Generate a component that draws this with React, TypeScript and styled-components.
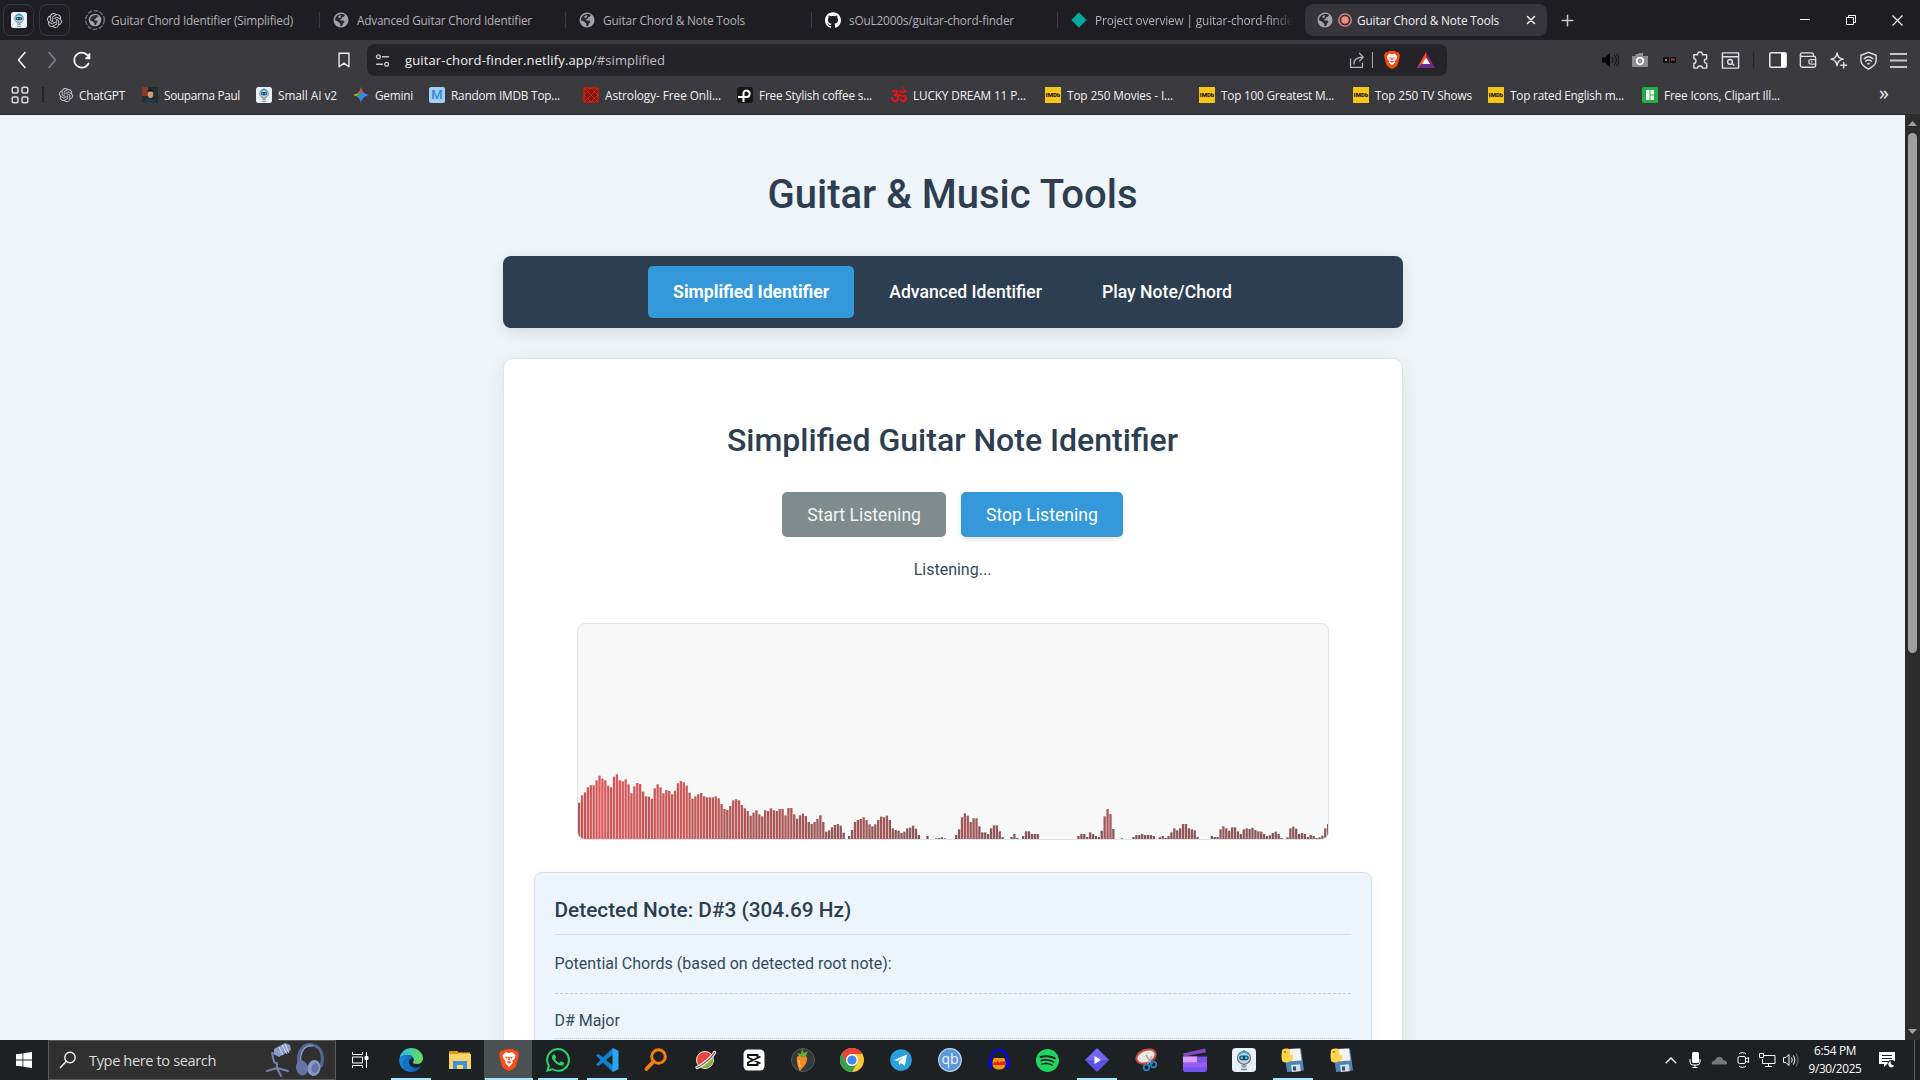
import React, { useLayoutEffect, useRef, useState } from "react";
import styled, { createGlobalStyle, css } from "styled-components";
import { SiOpenai, SiGithub, SiSpotify, SiWhatsapp } from "react-icons/si";

const ui = `"Open Sans", "Noto Sans", sans-serif`;

const GlobalStyle = createGlobalStyle`
  * { box-sizing: border-box; }
  body { margin: 0; overflow: hidden; background: #eef4f8; }
  svg { display: block; flex: none; }
`;

const Screen = styled.div`
  width: 1920px;
  height: 1080px;
  display: grid;
  grid-template-rows: 40px 40px 35px 925px 40px;
  font-family: ${ui};
  overflow: hidden;
`;

/* Label whose tracking adapts so that the text fills a known width */
const LabelText = styled.span`
  white-space: pre;
  display: inline-block;
`;
function Label({ text, width }: { text: string; width?: number }) {
  const ref = useRef<HTMLSpanElement>(null);
  const [track, setTrack] = useState(0);
  useLayoutEffect(() => {
    if (ref.current && width) {
      setTrack((width - ref.current.getBoundingClientRect().width) / text.length);
    }
  }, []);
  return <LabelText ref={ref} style={{ letterSpacing: track }}>{text}</LabelText>;
}

/* ---------- Tab strip ---------- */
const TabStrip = styled.div`
  display: flex;
  align-items: center;
  background: #1e1d22;
  padding-left: 3px;
`;
const PinnedTab = styled.div`
  width: 31px;
  height: 32px;
  margin-right: 5px;
  border: 1px solid #37363c;
  border-radius: 8px;
  display: flex;
  align-items: center;
  justify-content: center;
`;
const Tab = styled.div<{ $active?: boolean; $first?: boolean }>`
  width: ${(p) => (p.$active ? 242 : p.$first ? 244 : 245)}px;
  flex: none;
  height: 32px;
  display: flex;
  align-items: center;
  gap: ${(p) => (p.$active ? 5 : p.$first ? 6 : 8)}px;
  padding-left: ${(p) => (p.$active ? 12 : p.$first ? 10 : 13)}px;
  margin-left: ${(p) => (p.$active ? 2 : 0)}px;
  border-radius: ${(p) => (p.$active ? 8 : 0)}px;
  background: ${(p) => (p.$active ? "#36353b" : "transparent")};
  color: ${(p) => (p.$active ? "#f2f1f4" : "#b4b2b8")};
  font-size: 11.8px;
  overflow: hidden;
`;
const TabTitle = styled.div<{ $fade?: boolean }>`
  flex: 1;
  margin-top: -1px;
  overflow: hidden;
  white-space: nowrap;
  ${(p) => p.$fade && css`mask-image: linear-gradient(90deg, #000 85%, transparent 95%);`}
`;
const TabRule = styled.div`
  width: 1px;
  height: 16px;
  background: #3b3a40;
`;
const WindowButtons = styled.div`
  margin-left: auto;
  display: flex;
`;
const WindowButton = styled.div`
  width: 46px;
  display: flex;
  justify-content: center;
`;
const NewTab = styled.div`margin-left: 14px;`;
const TabClose = styled.div`margin-right: 11px;`;

/* ---------- Toolbar ---------- */
const Toolbar = styled.div`
  display: flex;
  align-items: center;
  background: #3b3a3f;
  padding: 4px 7px;
`;
const ToolSlot = styled.div<{ $w?: number }>`
  width: ${(p) => p.$w ?? 30}px;
  height: 32px;
  display: flex;
  align-items: center;
  justify-content: center;
`;
const ToolSpacer = styled.div<{ $w?: number }>`
  ${(p) => (p.$w ? `width: ${p.$w}px;` : "flex: 1;")}
`;
const AddressBar = styled.div`
  width: 1080px;
  height: 32px;
  margin-left: 8px;
  display: flex;
  align-items: center;
  background: #242328;
  border-radius: 8px;
  padding: 0 3px 0 8px;
  color: #f1f1f3;
  font-size: 13px;
`;
const Url = styled.div`
  margin-left: 15px;
  flex: 1;
  em { font-style: normal; color: #c0bfc5; }
`;
const Rule = styled.div<{ $h: number; $c: string }>`
  width: 1px;
  height: ${(p) => p.$h}px;
  background: ${(p) => p.$c};
`;

/* ---------- Bookmarks ---------- */
const Bookmarks = styled.div`
  display: flex;
  align-items: center;
  background: #3b3a3f;
  border-bottom: 1px solid #2d2c31;
  padding: 0 31px 5px 11px;
  color: #f2f1f4;
  font-size: 11.8px;
`;
const Bookmark = styled.div<{ $w: number }>`
  width: ${(p) => p.$w}px;
  flex: none;
  display: flex;
  align-items: center;
  gap: 6px;
  white-space: nowrap;
`;
const BookmarkRule = styled.div`
  width: 2px;
  height: 16px;
  margin: 0 15px 0 13px;
  background: #242328;
`;
const More = styled.div`
  margin-left: auto;
  font-size: 20px;
  line-height: 16px;
  padding-bottom: 3px;
`;
const Tile = styled.div<{ $bg: string; $fg: string; $size?: number; $r?: number }>`
  width: 16px;
  height: 16px;
  flex: none;
  display: flex;
  align-items: center;
  justify-content: center;
  background: ${(p) => p.$bg};
  color: ${(p) => p.$fg};
  border-radius: ${(p) => p.$r ?? 0}px;
  font: ${(p) => ((p.$size ?? 12) > 10 ? 500 : 900)} ${(p) => p.$size ?? 12}px/1 "Roboto", sans-serif;
`;

/* ---------- Page ---------- */
const Viewport = styled.div`
  display: flex;
  overflow: hidden;
  background: #eef4f8;
`;
const Page = styled.main`
  width: 1905px;
  display: flex;
  flex-direction: column;
  align-items: center;
  font-family: Roboto, sans-serif;
  color: #34495e;
`;
const Title = styled.h1`
  margin: 52px 0 0;
  height: 89px;
  flex: none;
  line-height: 56px;
  font-size: 40px;
  font-weight: 500;
  color: #2c3e50;
`;
const Nav = styled.nav`
  width: 900px;
  height: 72px;
  flex: none;
  display: flex;
  justify-content: center;
  align-items: center;
  gap: 10px;
  background: #2c3e50;
  border-radius: 8px;
  box-shadow: 0 4px 15px rgba(0, 0, 0, 0.1);
`;
const NavButton = styled.button<{ $active?: boolean }>`
  height: 52px;
  padding: 0 25px;
  border: 0;
  border-radius: 5px;
  background: ${(p) => (p.$active ? "#3498db" : "transparent")};
  color: #fff;
  font: ${(p) => (p.$active ? 700 : 500)} 17.6px Roboto, sans-serif;
`;
const Card = styled.section`
  width: 900px;
  flex: none;
  margin-top: 30px;
  height: 900px;
  padding: 56px 30px 30px;
  display: flex;
  flex-direction: column;
  align-items: center;
  background: #fff;
  border: 1px solid #dce4ec;
  border-radius: 10px;
  box-shadow: 0 5px 20px rgba(0, 0, 0, 0.08);
`;
const Heading = styled.h2`
  margin: 0;
  height: 77px;
  line-height: 50px;
  font-size: 32px;
  font-weight: 500;
  color: #2c3e50;
`;
const Actions = styled.div`
  display: flex;
  gap: 15px;
`;
const ActionButton = styled.button<{ $disabled?: boolean }>`
  height: 45px;
  padding: 0 25px;
  border: 0;
  border-radius: 5px;
  color: ${(p) => (p.$disabled ? "#f4f6f6" : "#fff")};
  background: ${(p) => (p.$disabled ? "#7f8c8d" : "#3498db")};
  box-shadow: ${(p) => (p.$disabled ? "none" : "0 2px 5px rgba(0,0,0,.12)")};
  font: 400 17.6px Roboto, sans-serif;
`;
const Status = styled.p`
  margin: 20px 0 0;
  font-size: 16px;
  line-height: 26px;
`;
const Spectrum = styled.div`
  width: 752px;
  height: 217px;
  flex: none;
  margin-top: 40px;
  background: #f8f8f8;
  border: 1px solid #dce4ec;
  border-radius: 8px;
  overflow: hidden;
`;
const Results = styled.div`
  width: 838px;
  margin-top: 32px;
  height: 300px;
  flex: none;
  padding: 20px;
  background: #ecf5fb;
  border: 1px solid #d3e2eb;
  border-radius: 8px;
  box-shadow: 0 2px 10px rgba(0, 0, 0, 0.05);
`;
const Detected = styled.h3`
  margin: 0 0 15px;
  height: 42px;
  line-height: 34px;
  font-size: 20.8px;
  font-weight: 500;
  color: #2c3e50;
  border-bottom: 1px solid #d9dfe2;
`;
const Hint = styled.p`
  margin: 0;
  height: 44px;
  line-height: 27px;
  font-size: 16px;
  border-bottom: 1px dashed #c5ced2;
`;
const Chord = styled.p`
  margin: 0;
  padding-top: 14px;
  height: 45px;
  line-height: 26px;
  font-size: 16px;
  border-bottom: 1px dotted #c5ced2;
`;
const Scrollbar = styled.div`
  width: 15px;
  background: #2c2c2c;
  display: flex;
  flex-direction: column;
  align-items: center;
  padding: 6px 0 6px;
`;
const Thumb = styled.div`
  width: 9px;
  height: 520px;
  margin: 7px 0 auto;
  border-radius: 5px;
  background: #9f9f9f;
`;

/* ---------- Taskbar ---------- */
const Taskbar = styled.footer`
  display: flex;
  background: #1d2124;
  color: #fff;
`;
const StartButton = styled.div`
  width: 48px;
  display: flex;
  align-items: center;
  justify-content: center;
`;
const Search = styled.div`
  width: 288px;
  border: 1px solid #5c5c5c;
  background: #303030;
  display: flex;
  align-items: center;
  padding-left: 10px;
  color: #dcdcdc;
  font-size: 14.6px;
`;
const SearchText = styled.div`
  margin-left: 12px;
  flex: 1;
`;
const TaskView = styled.div`
  width: 50px;
  padding-right: 2px;
  display: flex;
  align-items: center;
  justify-content: center;
`;
const Apps = styled.div`
  display: flex;
`;
const AppSlot = styled.div<{ $open?: boolean; $active?: boolean }>`
  width: 49px;
  height: 40px;
  display: flex;
  justify-content: center;
  align-items: center;
  background: ${(p) => (p.$active ? "linear-gradient(#4b5053, #4b5053) no-repeat 0 0 / 48px 40px" : "none")};
  ${(p) =>
    p.$open &&
    css`
      &::after {
        content: "";
        flex: none;
        align-self: flex-end;
        height: 2px;
        width: ${p.$active ? 48 : 40}px;
        margin-left: ${p.$active ? -48 : -44}px;
        margin-right: ${p.$active ? 0 : 4}px;
        background: #a8e6fa;
      }
    `}
`;
const SlotIcon = styled.div`
  width: 49px;
  flex: none;
  display: flex;
  justify-content: center;
`;
const Tray = styled.div`
  margin-left: auto;
  display: flex;
  align-items: center;
`;
const TrayIcon = styled.div`
  width: 24px;
  display: flex;
  justify-content: center;
`;
const Clock = styled.div`
  width: 64px;
  margin-top: -2px;
  text-align: center;
  font-size: 11.8px;
  line-height: 18px;
`;
const Notice = styled.div`
  width: 41px;
  display: flex;
  justify-content: center;
`;
const Peek = styled.div`
  width: 6px;
  height: 40px;
  border-left: 1px solid #5a5d5f;
`;

/* ---------- Icons ---------- */
const Globe = () => (
  <svg width="16" height="16" viewBox="0 0 16 16">
    <circle cx="8" cy="8" r="7.5" fill="#a1a3a8" />
    <path d="M8 2c1.500-.3 3 0 4 1l-1.500 2-1.500.3-.3 1.500L7 7.500l.5 1h3l1 1.500-1.500 1.500-.8 2.500-1.700.3-.5-2.800L5 9.500 2 8.300C2 5 4.500 2.500 8 2zM7.500 3L5 4.500 6 6l2-.8z" fillRule="evenodd" fill="#2a292e" />
  </svg>
);
const LoadingGlobe = () => (
  <svg width="20" height="20" viewBox="0 0 20 20">
    <circle cx="10" cy="10" r="9.3" fill="none" stroke="#7b7a80" strokeWidth="1.3" strokeDasharray="4.5 1.5" />
    <circle cx="10" cy="10" r="6.3" fill="#a1a3a8" />
    <path d="M10 5c1.300-.2 2.500 0 3.300.9L12 7.500l-1.200.3-.3 1.200-1.300.6.4.8H12l.8 1.200-1.200 1.300-.7 2-1.300.2-.4-2.300L7.500 11.200 5 10.300C5 7.500 7 5.500 10 5z" fill="#2a292e" />
  </svg>
);
const Robot = ({ s = 16 }: { s?: number }) => (
  <svg width={s} height={s} viewBox="0 0 16 16">
    <rect width="16" height="16" rx="2.5" fill="#e9f1f7" />
    <path d="M8 1.4v2" stroke="#647b8e" />
    <circle cx="8" cy="6.6" r="4.3" fill="#c4d4e0" stroke="#52687b" strokeWidth=".7" />
    <rect x="4.8" y="5" width="6.4" height="3.2" rx="1.6" fill="#17415c" />
    <circle cx="6.5" cy="6.6" r=".9" fill="#35d0ed" />
    <circle cx="9.5" cy="6.6" r=".9" fill="#35d0ed" />
    <path d="M4.7 4.3C6 2.3 10 2.3 11.3 4.3" fill="none" stroke="#2ca8cf" strokeWidth="1.2" />
    <path d="M6 11.5h4L9.3 13H6.7z" fill="#8299aa" />
    <path d="M6 14.3h4" stroke="#71899c" />
  </svg>
);
const Line = ({ d, s = 20, c = "#e0dfe4", w = 1.5, f = "none" }: { d: string; s?: number; c?: string; w?: number; f?: string }) => (
  <svg width={s} height={s} viewBox="0 0 20 20" fill={f} stroke={c} strokeWidth={w} strokeLinecap="round" strokeLinejoin="round">
    <path d={d} />
  </svg>
);
const Lion = ({ w, h }: { w: number; h: number }) => (
  <svg width={w} height={h} viewBox="0 0 18 20">
    <path d="M5.5 0h7L14 1.6l2-.3L18 4l-.6 2 .3 1-2.3 8.2c-.4 1.4-2 2.500-3.400 3.400L9 20l-3-1.400c-1.400-.9-3-2-3.400-3.400L.3 7l.3-1L0 4l2-2.700 2 .3z" fill="#fb4a12" />
    <path d="M9 3.600l2.900-.7 3 2.900-.6 2.400-2.100 2.800.2 1.700L9 16.300l-3.400-3.600.2-1.700-2.100-2.800-.6-2.400 3-2.900z" fill="#fff" />
    <path d="M5 6.800l2.900.6-.6 1.800zM13 6.800l-2.900.6.6 1.800zM8.400 7h1.200l.2 3h-1.600zM6.800 11.800L9 10.900l2.200.9L9 13.400z" fill="#fb4a12" />
  </svg>
);
const Bat = () => (
  <svg width="18" height="16" viewBox="0 0 18 16">
    <path d="M9 0L0 16l9-5.500z" fill="#ff4724" />
    <path d="M9 0l9 16-6-4.500L9 5z" fill="#9e1f63" />
    <path d="M0 16h18l-5-4.500H5z" fill="#662d91" />
    <path d="M9 5.500l4 6.500H5z" fill="#fff" />
  </svg>
);
const Imdb = () => <Tile $bg="#f5c518" $fg="#1a1500" $size={6}>IMDb</Tile>;
const Gem = () => (
  <svg width="16" height="16" viewBox="0 0 16 16">
    <defs>
      <linearGradient id="gem" x1="0" y1="0.2" x2="1" y2="0.6">
        <stop offset=".2" stopColor="#f5b32c" /><stop offset=".4" stopColor="#30a852" /><stop offset=".6" stopColor="#3186ff" /><stop offset="1" stopColor="#4a8bff" />
      </linearGradient>
    </defs>
    <path d="M8 0c.6 4 3.500 7.300 8 8-4.500.7-7.400 4-8 8-.6-4-3.500-7.300-8-8 4.500-.7 7.400-4 8-8z" fill="url(#gem)" />
    <path d="M8 0c.6 4 2 5.500 3.500 6.500L8 6 5.500 5.300C7 4 7.700 2 8 0z" fill="#ea4335" />
  </svg>
);
const Portrait = () => (
  <svg width="16" height="16" viewBox="0 0 16 16">
    <rect width="16" height="16" fill="#20302f" />
    <rect width="6" height="9" fill="#8b3a22" />
    <path d="M3 16c0-3 2-4.500 5-4.500s6 1.500 6 4.500z" fill="#27384a" />
    <ellipse cx="8.500" cy="7" rx="2.800" ry="4" fill="#d19a78" />
    <path d="M5.300 6c0-5 6.700-5 6.400 0L10.500 4.500h-4z" fill="#120d0c" />
  </svg>
);

/* ---------- Spectrum data: [offset from left, bar tops] in thirds of a pixel ---------- */
const BASE = 297;
const STEP = 8.72;
const runs: [number, number[]][] = [
  [3, [188,166,157,142,136,136,121,107,116,121,137,142,110,103,121,124,118,133,160,139,129,132,155,169,170,176,145,133,142,160,150,153,163,152,130,123,127,137,158,176,169,163,159,169,172,172,172,169,175,192,207,210,198,181,178,181,195,205,213,227,218,211,223,229,211,213,205,211,213,207,207,226,204,204,223,236,226,221,228,246,252,246,237,226,246,275,271,262,255,252,257,278]],
  [813, [288,270,246,240,237,232,240,253,259,253,240,230,232,227,240,265,270,272,279,275,265,263,257,266,285]],
  [1048, [288]],
  [1074, [295,294,292,295]],
  [1134, [285,268,232,220,227,246,235,235,259,277,277,282,265,256,256,274,291]],
  [1300, [291,282,294]],
  [1335, [288,274,274,282,282,282]],
  [1501, [288,282,282,291,277,282,288,291,272,229,207,222,267]],
  [1631, [295]],
  [1666, [291,285,285,282,285,285,285,288]],
  [1745, [292,288,294,288,277,265,271,265,252,252,265,268,271,291]],
  [1901, [288,291,291,268,259,265,272,262,262,274,282,268,265,267,264,270,274,275,282,288,286,279,275,282,294]],
  [2128, [292,265,260,266,282,279,282,291,285,288,294,292,287,265,252]],
];
const Bars = () => (
  <svg width="751" height="215" viewBox="0 0 751 215">
    {runs.flatMap(([start, tops]) =>
      tops.map((top, i) => {
        const h = (BASE - top) / 3;
        return (
          <rect
            key={`${start}-${i}`}
            x={(start + i * STEP) / 3 - 1}
            y={215 - h}
            width={2.3}
            height={h}
            opacity={0.82}
            fill={`rgb(${Math.round(100 + h * 1.85)},50,50)`}
          />
        );
      })
    )}
  </svg>
);

/* ---------- Taskbar artwork ---------- */
const S = ({ children, s = 24 }: { children: React.ReactNode; s?: number }) => (
  <svg width={s} height={s} viewBox="0 0 24 24">{children}</svg>
);
const Edge = () => (
  <S>
    <defs>
      <linearGradient id="e1" x1="0" x2="1"><stop stopColor="#2bb4e9" /><stop offset="1" stopColor="#6be054" /></linearGradient>
      <linearGradient id="e2" x1="0" x2="1"><stop stopColor="#1b8be0" /><stop offset="1" stopColor="#0c4f9d" /></linearGradient>
    </defs>
    <path d="M.5 10C1.500 4 6.500 0 12 0c7 0 12 5 12 10 0 4-3 6-6.500 6-3 0-4-1-3.400-2C16 11 14 7 9 7c-4 0-7.500 2-8.500 3z" fill="url(#e1)" />
    <path d="M.2 11C2 8 5 7 8.500 7c3 0 5 1.500 5.500 3-5 0-6 8 1 9.500 2.800.5 5.500-.5 7.500-1.500C20 22 16 24 12 24 5 24-.5 18 .2 11z" fill="url(#e2)" />
    <path d="M10 9.500C6 12 7 20 13 23.800 7 24 3.500 19 4 15c.4-3.500 3-5.500 6-5.500z" fill="#1272c9" />
  </S>
);
const Folder = () => (
  <S>
    <path d="M1 3h9v4H1z" fill="#dc9a0c" />
    <path d="M10 4.500h12V7H10z" fill="#f0b92c" />
    <path d="M1 6h22v15H1z" fill="#fdd367" />
    <path d="M5 21v-8h14v8h-4v-4h-6v4z" fill="#3d94d8" />
  </S>
);
const Code = () => (
  <S>
    <path d="M18 0L8 9.300 3.500 5.900 1 7.200l4.500 4.800L1 16.800l2.500 1.300L8 14.700 18 24z" fill="#1180cf" />
    <path d="M18 6.500v11L11 12z" fill="#1d2124" />
    <path d="M17.500 0L23.500 2.700v18.600L17.500 24z" fill="#2aa5f0" />
  </S>
);
const Finder = () => (
  <S><circle cx="14.500" cy="8.500" r="6.800" fill="none" stroke="#f97c0d" strokeWidth="3" /><path d="M9.500 13.500L2.500 21" stroke="#f97c0d" strokeWidth="3.800" strokeLinecap="round" /></S>
);
const Planet = () => (
  <S>
    <circle cx="12" cy="12" r="8.500" fill="#e9463b" stroke="#f3efe9" />
    <path d="M5 17L20 9c2 8-7 15-15 8z" fill="#87b34c" />
    <path d="M4 19.500C8 18 18 11 21.500 4.500" stroke="#f3efe9" strokeWidth="3.400" strokeLinecap="round" fill="none" />
    <path d="M4 19.500C8 18 18 11 21.500 4.500" stroke="#7c4a44" strokeWidth="1.200" strokeLinecap="round" fill="none" />
  </S>
);
const Cut = () => (
  <S><rect x="1.500" y="1.500" width="21" height="21" rx="4.500" fill="#fff" /><path d="M15.500 9V7H6v2.500l12.500 6M15.500 15v2H6v-2.500l12.500-6" fill="none" stroke="#111" strokeWidth="1.900" /></S>
);
const Fruit = () => (
  <S>
    <circle cx="12" cy="12" r="11.500" fill="#33383b" stroke="#565b5e" />
    <path d="M6 9c3-3 9-3 10 1 1 5-4 9-7 13-2-3-4-10-3-14z" fill="#f88920" />
    <path d="M8 12c0 3 .5 5 1.500 7" stroke="#ffc36d" strokeWidth="1.500" fill="none" />
    <path d="M8 8l-2-3 4 1 1-6 2 5 4-2-2 5-3 2z" fill="#68ad31" />
  </S>
);
const Chrome = () => (
  <S>
    <circle cx="12" cy="12" r="12" fill="#fcc934" />
    <path d="M1.600 6A12 12 0 0 1 22.400 6H12a6 6 0 0 0-5.200 9z" fill="#ea4335" />
    <path d="M1.600 6A12 12 0 0 0 12 24l5.200-9A6 6 0 0 1 6.800 15z" fill="#34a04f" />
    <circle cx="12" cy="12" r="5.900" fill="#fff" /><circle cx="12" cy="12" r="4.600" fill="#4285f4" />
  </S>
);
const Telegram = () => (
  <S><circle cx="12" cy="12" r="10.800" fill="#2aa1dc" /><path d="M5 12l13-5.500-2.200 11.300-3.800-2.700-1.900 1.900-.6-3.500 5-4.500-6.200 4z" fill="#fff" /></S>
);
const Torrent = () => (
  <S><circle cx="12" cy="12" r="11.300" fill="#5c97dc" stroke="#b9d5f3" strokeWidth="1.200" /><text x="12" y="16" textAnchor="middle" fontFamily="Open Sans" fontSize="14" fill="#eef5fd">qb</text></S>
);
const Phones = () => (
  <S>
    <path d="M7 10h10c2 2 2 8 0 10-3 2-7 2-10 0-2-2-2-8 0-10z" fill="#f09a1b" />
    <path d="M6 15l2-1 1 1 2-3 1 3 2-2 1 1 3-1v4H6z" fill="#e32218" />
    <path d="M3.500 18C2 6 7 2 12 2s10 4 8.500 16" fill="none" stroke="#0a0ad6" strokeWidth="2.600" />
    <path d="M.5 13h4.500v8H2zM19 13h4.500L22 21h-3z" fill="#0808d8" />
  </S>
);
const Diamond = () => (
  <S>
    <path d="M12 .5L23.500 12 12 23.500.5 12z" fill="#5c52e8" strokeLinejoin="round" stroke="#6759ef" />
    <path d="M12 .5L23.500 12H.5z" fill="#8872f7" opacity=".6" /><path d="M9.500 8l6.500 4-6.500 4z" fill="#fff" />
  </S>
);
const Snip = () => (
  <S>
    <ellipse cx="12" cy="8.500" rx="10" ry="6.500" transform="rotate(-22 12 8.500)" fill="#ece8e7" stroke="#cc4740" strokeWidth="2" />
    <path d="M12 7l6 9M18 8l-5 9" stroke="#a4adb3" strokeWidth="1.500" />
    <circle cx="12.500" cy="19.500" r="2.800" fill="none" stroke="#2387c5" strokeWidth="1.800" /><circle cx="19.500" cy="16.500" r="2.800" fill="none" stroke="#2387c5" strokeWidth="1.800" />
  </S>
);
const Clip = () => (
  <S>
    <path d="M0 8.500h24V22q0 2-2 2H2q-2 0-2-2z" fill="#7453ee" /><path d="M0 8.500h14v6H0z" fill="#dd9dfa" /><path d="M0 14.500h24v5H0z" fill="#a65ff3" opacity=".75" />
    <path d="M0 5.500L22 .5l1 3.800L1 8.500z" fill="#8748c9" />
  </S>
);
const PyDisk = () => (
  <S>
    <path d="M3 1l17-.500 3 22-17 1.500z" fill="#4c86b9" /><path d="M8 1l11-.500 1.500 12-11 .8z" fill="#f4f2ed" />
    <path d="M10 17l9-.8.7 7-8.800.7z" fill="#d7dcdf" /><path d="M12 18.500h3v4h-3z" fill="#36566e" />
    <path d="M1 3c0-3 7-3 8-1v5h3v4c-2 3-7 4-10 3-2-2-1.500-8-1-11z" fill="#ffd44b" /><circle cx="4" cy="4" r=".9" fill="#745d12" />
  </S>
);
const StudioArt = () => (
  <svg width="64" height="38" viewBox="0 0 64 38">
    <g stroke="#7480ae" strokeWidth="2" fill="none" strokeLinecap="round">
      <path d="M7 12l2 9 3 2M12 22v6M12 27L2 30M12 27l11 3M12 27l4 8M7 12l7 2" />
    </g>
    <path d="M9 8l11-6 5 2 1 5-12 7-5-3z" fill="#8b9cca" />
    <path d="M17 4l5 9M20 3l4 9M14 6l4 8" stroke="#c7ece4" strokeWidth="1" />
    <path d="M34 26C31 8 40 2 48 4c9 2 11 12 8 22" stroke="#56679c" strokeWidth="3" fill="none" />
    <path d="M36 23C34 9 41 4 48 5" stroke="#96abd8" strokeWidth="1.200" fill="none" />
    <ellipse cx="37" cy="27" rx="6" ry="7.500" fill="#6472a5" transform="rotate(-15 37 27)" />
    <ellipse cx="49" cy="27" rx="6.500" ry="8" fill="#8997c4" transform="rotate(15 49 27)" />
    <ellipse cx="50" cy="27" rx="3.500" ry="5" fill="#6574aa" transform="rotate(15 50 27)" />
  </svg>
);

const apps: { icon: React.ReactNode; open?: boolean; active?: boolean }[] = [
  { icon: <Edge />, open: true },
  { icon: <Folder /> },
  { icon: <Lion w={20} h={24} />, open: true, active: true },
  { icon: <SiWhatsapp size={24} color="#27d367" />, open: true },
  { icon: <Code />, open: true },
  { icon: <Finder /> },
  { icon: <Planet /> },
  { icon: <Cut /> },
  { icon: <Fruit /> },
  { icon: <Chrome /> },
  { icon: <Telegram /> },
  { icon: <Torrent /> },
  { icon: <Phones /> },
  { icon: <SiSpotify size={23} color="#1ed760" /> },
  { icon: <Diamond />, open: true },
  { icon: <Snip /> },
  { icon: <Clip /> },
  { icon: <Robot s={24} /> },
  { icon: <PyDisk />, open: true },
  { icon: <PyDisk /> },
];

const bookmarks: { icon: React.ReactNode; text: string; tw: number; w: number }[] = [
  { icon: <SiOpenai size={14} color="#c9c8cd" />, text: "ChatGPT", tw: 46, w: 83 },
  { icon: <Portrait />, text: "Souparna Paul", tw: 76, w: 114 },
  { icon: <Robot />, text: "Small AI v2", tw: 59, w: 97 },
  { icon: <Gem />, text: "Gemini", tw: 38, w: 76 },
  { icon: <Tile $bg="#9fd0f8" $fg="#3487cf" $r={2} $size={13}>M</Tile>, text: "Random IMDB Top...", tw: 109, w: 154 },
  {
    icon: (
      <svg width="16" height="16" viewBox="0 0 16 16"><rect width="16" height="16" rx="2" fill="#7e160d" /><path d="M1 1l14 14M15 1L1 15M8 1L1 8l7 7 7-7zM1 1h14v14H1z" stroke="#d62a16" fill="none" /></svg>
    ),
    text: "Astrology- Free Onli...", tw: 116, w: 154,
  },
  {
    icon: (
      <svg width="16" height="16" viewBox="0 0 16 16"><rect width="16" height="16" rx="2.500" fill="#161616" /><path d="M6.500 15V5.500a3.200 3.200 0 1 1 3.200 4.500H1" stroke="#fff" strokeWidth="2" fill="none" /></svg>
    ),
    text: "Free Stylish coffee s...", tw: 113, w: 154,
  },
  {
    icon: (
      <svg width="16" height="16" viewBox="0 0 16 16" fill="none" stroke="#ee1111" strokeWidth="1.900" strokeLinecap="round"><path d="M2 4.500c2-2 5-.5 3.500 2L4 8c4 0 4 6 .5 6C2.500 14 1 12.500 1 11M6.500 9c2-3 4 1 6 0 3-1.500 3 4 .5 5-1.500.3-3-1-3.500-2M9 4c1.500 1.500 4 1.500 5.500 0" /><circle cx="12" cy="1.500" r=".4" /></svg>
    ),
    text: "LUCKY DREAM 11 P...", tw: 113, w: 154,
  },
  { icon: <Imdb />, text: "Top 250 Movies - I...", tw: 106, w: 154 },
  { icon: <Imdb />, text: "Top 100 Greatest M...", tw: 113, w: 154 },
  { icon: <Imdb />, text: "Top 250 TV Shows", tw: 97, w: 135 },
  { icon: <Imdb />, text: "Top rated English m...", tw: 114, w: 154 },
  {
    icon: (
      <svg width="16" height="16" viewBox="0 0 16 16"><rect width="16" height="16" rx="1.500" fill="#1fb141" /><path d="M4 3h3.500v10H4zM8.500 3H12v4.500H8.500zM8.500 8.500H12V13H8.500z" fill="#fff" /></svg>
    ),
    text: "Free Icons, Clipart Ill...", tw: 116, w: 150,
  },
];

export default function App() {
  return (
    <Screen>
      <GlobalStyle />
      <TabStrip>
        <PinnedTab><Robot /></PinnedTab>
        <PinnedTab><SiOpenai size={15} color="#c9c8cd" /></PinnedTab>
        <Tab $first><LoadingGlobe /><TabTitle><Label text="Guitar Chord Identifier (Simplified)" width={182} /></TabTitle></Tab>
        <TabRule />
        <Tab><Globe /><TabTitle><Label text="Advanced Guitar Chord Identifier" width={175} /></TabTitle></Tab>
        <TabRule />
        <Tab><Globe /><TabTitle><Label text="Guitar Chord & Note Tools" width={142} /></TabTitle></Tab>
        <TabRule />
        <Tab><SiGithub size={16} color="#fff" /><TabTitle><Label text="sOuL2000s/guitar-chord-finder" width={165} /></TabTitle></Tab>
        <TabRule />
        <Tab>
          <svg width="16" height="16" viewBox="0 0 16 16"><path d="M8 .3L15.700 8 8 15.700.3 8z" fill="#05a5a0" /></svg>
          <TabTitle $fade><Label text="Project overview | guitar-chord-finder" width={203} /></TabTitle>
        </Tab>
        <Tab $active>
          <Globe />
          <svg width="14" height="14" viewBox="0 0 14 14"><circle cx="7" cy="7" r="6.200" fill="none" stroke="#f28b82" strokeWidth="1.300" /><circle cx="7" cy="7" r="3.700" fill="#f28b82" /></svg>
          <TabTitle><Label text="Guitar Chord & Note Tools" width={142} /></TabTitle>
          <TabClose><Line s={10} w={3} c="#f5f5f7" d="M3 3l14 14M17 3L3 17" /></TabClose>
        </Tab>
        <NewTab><Line s={13} w={2.4} c="#c9c8cc" d="M10 2v16M2 10h16" /></NewTab>
        <WindowButtons>
          <WindowButton><svg width="10" height="10"><path d="M0 4.500h10" stroke="#fff" /></svg></WindowButton>
          <WindowButton><svg width="10" height="10"><path d="M.5 2.500h7v7h-7zM2.500 2.500v-2h7v7h-2" stroke="#fff" fill="none" /></svg></WindowButton>
          <WindowButton><svg width="11" height="11"><path d="M.5.5l10 10M10.500.5l-10 10" stroke="#fff" strokeWidth="1.100" /></svg></WindowButton>
        </WindowButtons>
      </TabStrip>

      <Toolbar>
        <ToolSlot><Line c="#f3f2f5" w={1.6} d="M13 2.500L6.500 10l6.500 7.500" /></ToolSlot>
        <ToolSlot><Line c="#828187" w={1.6} d="M7 2.500l6.500 7.500L7 17.500" /></ToolSlot>
        <ToolSlot><Line c="#f3f2f5" w={1.7} d="M16.500 13.500a7.500 7.500 0 1 1 .5-5.500M17.500 4v4.500H14z" /></ToolSlot>
        <ToolSpacer $w={232} />
        <ToolSlot $w={30}><Line c="#f3f2f5" d="M4.500 2.500h11v15L10 13.500l-5.500 4z" s={18} /></ToolSlot>
        <AddressBar>
          <Line s={15} c="#c9c8cd" w={1.8} d="M7 5a2.500 2.500 0 1 1-5 0 2.500 2.500 0 0 1 5 0zM10 5h8M18 15a2.500 2.500 0 1 1-5 0 2.500 2.500 0 0 1 5 0zM2 15h8" />
          <Url><Label text="guitar-chord-finder.netlify.app" width={187} /><em><Label text="/#simplified" width={73} /></em></Url>
          <ToolSlot $w={28}><Line s={17} c="#b5b4ba" d="M3 8v10h14v-5M7 14c0-6 4-8 11-8M13.500 1.500L18 6l-4.500 4.500" /></ToolSlot>
          <ToolSpacer $w={2} />
          <Rule $h={16} $c="#a9a8ae" />
          <ToolSlot $w={38}><Lion w={16} h={18} /></ToolSlot>
          <ToolSlot $w={29}><Bat /></ToolSlot>
          <ToolSpacer $w={4} />
        </AddressBar>
        <ToolSpacer />
        <ToolSlot>
          <svg width="17" height="16" viewBox="0 0 17 16"><path d="M0 5.500h3L8 1v14l-5-4.500H0z" fill="#050505" /><path d="M10 5c1.500 2 1.500 4 0 6M12 3c3 3 3 7 0 10M14 1.500c4 4 4 9 0 13" stroke="#0c0c0c" fill="none" /></svg>
        </ToolSlot>
        <ToolSlot>
          <svg width="16" height="14" viewBox="0 0 16 14"><path d="M0 3h3.500V1H6l1-1h4v3h5v11H0z" fill="#8e8e91" /><circle cx="8" cy="8" r="3.300" fill="#8e8e91" stroke="#fff" strokeWidth="1.800" /></svg>
        </ToolSlot>
        <ToolSlot>
          <svg width="14" height="7" viewBox="0 0 14 7"><rect width="6" height="6" fill="#111" /><rect x="7" width="6" height="6" fill="#111" /><path d="M2 2h2v2H2z" fill="#888" /><path d="M8 1.500h4v2H8z" fill="#a33" /></svg>
        </ToolSlot>
        <ToolSlot><Line d="M3 4h4c-1-4 6-4 5 0h4.500v4.500c-1.500 0-2.500 1-2.500 2s1 2.500 2.500 2.500V18H12c0-3-5-3-5 0H3v-5c3 0 3-5 0-5z" s={19} /></ToolSlot>
        <ToolSlot><Line s={19} d="M1.500 2h17v16h-17zM1.500 6h17M12 11.500a2.500 2.500 0 1 1-5 0 2.500 2.500 0 0 1 5 0zM11.500 13l2 2" /></ToolSlot>
        <ToolSpacer $w={8} />
        <Rule $h={16} $c="#242328" />
        <ToolSpacer $w={9} />
        <ToolSlot>
          <svg width="18" height="16" viewBox="0 0 18 16"><rect x=".8" y=".8" width="16.400" height="14.400" rx="1.500" fill="none" stroke="#e8e7ec" strokeWidth="1.500" /><path d="M12 1h5v14h-5z" fill="#fff" /></svg>
        </ToolSlot>
        <ToolSlot><Line s={18} d="M16 6V3.500L14 2H3.500a2 2 0 0 0 0 4H17q1.500 0 1.500 1.500V16q0 2-2 2h-13q-2 0-2-2V4M18.500 9.500H13q-2 0-2 2v1q0 2 2 2h5.500M14 12h.5" /></ToolSlot>
        <ToolSlot><Line s={19} d="M8.500 2c.7 4.500 2 5.500 6.500 6.500-4.500 1-5.800 2.500-6.500 7-.7-4.500-2-6-6.500-7 4.500-1 5.800-2 6.500-6.500zM15.500 12v6M12.500 15h6" /></ToolSlot>
        <ToolSlot><Line s={19} d="M10 1.500l8 3V10c0 4-4 7-8 9-4-2-8-5-8-9V4.500zM5.500 8c3-2.500 6-2.500 9 0M7 10.700c2-1.500 4-1.500 6 0M9.300 13.500h1.400" /></ToolSlot>
        <ToolSlot>
          <svg width="17" height="16"><path d="M0 2h17M0 8.500h17M0 15h17" stroke="#c6c5ca" strokeWidth="1.800" /></svg>
        </ToolSlot>
      </Toolbar>

      <Bookmarks>
        <svg width="18" height="18" viewBox="0 0 18 18" fill="none" stroke="#dddce1" strokeWidth="1.500">
          <rect x="1.200" y="1.200" width="5.800" height="5.800" rx="1.500" /><rect x="11" y="1.200" width="5.800" height="5.800" rx="1.500" />
          <rect x="1.200" y="11" width="5.800" height="5.800" rx="1.500" /><rect x="11" y="11" width="5.800" height="5.800" rx="1.500" />
        </svg>
        <BookmarkRule />
        {bookmarks.map((b) => (
          <Bookmark key={b.text} $w={b.w}>{b.icon}<Label text={b.text} width={b.tw} /></Bookmark>
        ))}
        <More>»</More>
      </Bookmarks>

      <Viewport>
        <Page>
          <Title>Guitar &amp; Music Tools</Title>
          <Nav>
            <NavButton $active>Simplified Identifier</NavButton>
            <NavButton>Advanced Identifier</NavButton>
            <NavButton>Play Note/Chord</NavButton>
          </Nav>
          <Card>
            <Heading>Simplified Guitar Note Identifier</Heading>
            <Actions>
              <ActionButton $disabled>Start Listening</ActionButton>
              <ActionButton>Stop Listening</ActionButton>
            </Actions>
            <Status>Listening...</Status>
            <Spectrum><Bars /></Spectrum>
            <Results>
              <Detected>Detected Note: D#3 (304.69 Hz)</Detected>
              <Hint>Potential Chords (based on detected root note):</Hint>
              <Chord>D# Major</Chord>
            </Results>
          </Card>
        </Page>
        <Scrollbar>
          <svg width="9" height="5"><path d="M4.500 0L9 5H0z" fill="#9f9f9f" /></svg>
          <Thumb />
          <svg width="9" height="5"><path d="M4.500 5L9 0H0z" fill="#9f9f9f" /></svg>
        </Scrollbar>
      </Viewport>

      <Taskbar>
        <StartButton>
          <svg width="16" height="16" viewBox="0 0 16 16"><path d="M0 2.300L6.500 1.400v6.200H0zM7.300 1.300L16 0v7.600H7.300zM0 8.400h6.500v6.200L0 13.700zM7.300 8.400H16V16l-8.700-1.300z" fill="#fff" /></svg>
        </StartButton>
        <Search>
          <svg width="18" height="18" viewBox="0 0 18 18"><circle cx="11" cy="6.500" r="5.200" fill="none" stroke="#eee" strokeWidth="1.400" /><path d="M7.300 10.300L1 17" stroke="#eee" strokeWidth="1.500" /></svg>
          <SearchText><Label text="Type here to search" width={127} /></SearchText>
          <StudioArt />
          <ToolSpacer $w={6} />
        </Search>
        <TaskView>
          <svg width="17" height="16" viewBox="0 0 17 16" stroke="#fff" fill="none"><path d="M.5 0v2.500h10V0M.5 5h10v6H.5zM.5 16v-2.500h10V16M14.500 0v16" /><path d="M13 4.500h3v3h-3z" fill="#fff" /></svg>
        </TaskView>
        <Apps>
          {apps.map((a, i) => (
            <AppSlot key={i} $open={a.open} $active={a.active}><SlotIcon>{a.icon}</SlotIcon></AppSlot>
          ))}
        </Apps>
        <Tray>
          <TrayIcon><svg width="12" height="7"><path d="M.7 6.300L6 1l5.300 5.300" stroke="#fff" strokeWidth="1.300" fill="none" /></svg></TrayIcon>
          <TrayIcon><svg width="12" height="16"><rect x="3" width="7" height="11" rx="1.500" fill="#fff" /><path d="M1 7v3q0 3 3 3h4q3 0 3-3V7M6 13v3M3.500 15.500h5" stroke="#fff" fill="none" /></svg></TrayIcon>
          <TrayIcon><svg width="17" height="9"><path d="M1 8.500C0 6 2 4.500 4 4.500 5 0 11-1 12 4c3 0 4.500 2 4 4.500z" fill="#75787a" /></svg></TrayIcon>
          <TrayIcon><svg width="12" height="16" fill="none" stroke="#fff"><rect x="1" y="4.500" width="7.500" height="7" rx="1.500" /><path d="M8.500 7l3-1.500v5L8.500 9M2 2c1-1.800 6-1.800 7 0M2 14c1 1.800 6 1.800 7 0" /></svg></TrayIcon>
          <TrayIcon><svg width="17" height="14" fill="none" stroke="#fff"><path d="M5 2.500h11v8H3.500V6M6 13.500h7M9.500 10.500v3M.5.5h4v4h-4z" /></svg></TrayIcon>
          <TrayIcon><svg width="17" height="14" fill="none" stroke="#fff"><path d="M.5 4.500h2.500l3-3v11l-3-3H.5zM8.500 4.500q1.500 2.500 0 5M10.500 2.500q3 4.500 0 9" /><path d="M13 .5q4 6.500 0 13" stroke="#74777a" /></svg></TrayIcon>
          <Clock><Label text="6:54 PM" width={42} /><br /><Label text="9/30/2025" width={53} /></Clock>
          <Notice><svg width="17" height="17"><path d="M0 0h16v12H8l-3 3v-3H0z" fill="#fff" /><path d="M3 3.500h10M3 6.500h10M3 9.500h6" stroke="#1d2124" /><circle cx="12.500" cy="12" r="4" fill="#1d2124" /><path d="M12 9a3.200 3.200 0 1 0 3.500 4.300A3 3 0 0 1 12 9z" fill="#fff" /></svg></Notice>
          <ToolSpacer $w={6} />
          <Peek />
        </Tray>
      </Taskbar>
    </Screen>
  );
}
